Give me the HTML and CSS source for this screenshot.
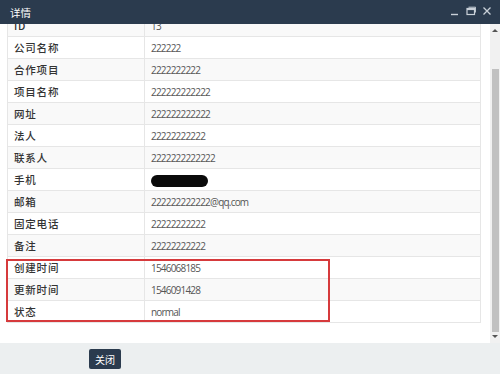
FILE: index.html
```html
<!DOCTYPE html>
<html lang="zh">
<head>
<meta charset="utf-8">
<link rel="stylesheet" href="styles.css">
</head>
<body>
<div class="dialog">
  <div class="titlebar">
    <span class="title">详情</span>
    <div class="controls">
      <svg class="ctl" width="10" height="10" viewBox="0 0 10 10"><path d="M1 8.5H8" stroke="#c9d0d8" stroke-width="1.4"/></svg>
      <svg class="ctl" width="10" height="10" viewBox="0 0 10 10"><rect x="1" y="2.5" width="7.5" height="6" fill="none" stroke="#c9d0d8" stroke-width="1.2"/><path d="M2.5 1.2H9.6V6.5" fill="none" stroke="#c9d0d8" stroke-width="1"/><path d="M1 3.3H8.5" stroke="#c9d0d8" stroke-width="1.6"/></svg>
      <svg class="ctl" width="10" height="10" viewBox="0 0 10 10"><path d="M1.5 1.5L8.5 8.5M8.5 1.5L1.5 8.5" stroke="#c9d0d8" stroke-width="1.3"/></svg>
    </div>
  </div>
  <div class="main">
    <div class="pane">
      <div class="table-wrap">
        <table class="detail">
          <tr><td class="k">ID</td><td class="v">13</td></tr>
          <tr><td class="k">公司名称</td><td class="v">222222</td></tr>
          <tr><td class="k">合作项目</td><td class="v">2222222222</td></tr>
          <tr><td class="k">项目名称</td><td class="v">222222222222</td></tr>
          <tr><td class="k">网址</td><td class="v">222222222222</td></tr>
          <tr><td class="k">法人</td><td class="v">22222222222</td></tr>
          <tr><td class="k">联系人</td><td class="v">2222222222222</td></tr>
          <tr><td class="k">手机</td><td class="v"><span class="redact"></span></td></tr>
          <tr><td class="k">邮箱</td><td class="v">222222222222@qq.com</td></tr>
          <tr><td class="k">固定电话</td><td class="v">22222222222</td></tr>
          <tr><td class="k">备注</td><td class="v">22222222222</td></tr>
          <tr><td class="k">创建时间</td><td class="v">1546068185</td></tr>
          <tr><td class="k">更新时间</td><td class="v">1546091428</td></tr>
          <tr><td class="k">状态</td><td class="v">normal</td></tr>
        </table>
        <div class="highlight"></div>
      </div>
    </div>
    <div class="scrollbar">
      <div class="arrow up"></div>
      <div class="track"><div class="thumb"></div></div>
      <div class="arrow down"></div>
    </div>
  </div>
  <div class="footer">
    <button class="btn">关闭</button>
  </div>
</div>
</body>
</html>
```

FILE: styles.css
```css
html, body {
  margin: 0;
  padding: 0;
}
body {
  width: 500px;
  height: 374px;
  overflow: hidden;
  font-family: "Open Sans", "Noto Sans CJK SC", sans-serif;
  font-size: 11px;
  background: #ffffff;
}
.dialog {
  display: flex;
  flex-direction: column;
  height: 374px;
}
.titlebar {
  height: 24px;
  flex: 0 0 24px;
  background: #2b3b4e;
  display: flex;
  align-items: center;
  justify-content: space-between;
  padding: 0 8px 0 10px;
  position: relative;
  z-index: 2;
}
.title {
  color: #ffffff;
  font-family: "Noto Sans CJK SC", sans-serif;
  font-size: 10.5px;
}
.controls {
  display: flex;
  gap: 6px;
  align-items: center;
  margin-top: -3px;
}
.ctl {
  display: block;
}
.main {
  flex: 0 0 319px;
  height: 319px;
  display: flex;
  background: #ffffff;
}
.pane {
  flex: 1;
  overflow: hidden;
  padding: 0 9px 0 7px;
}
.table-wrap {
  position: relative;
  margin-top: -10px;
}
.detail {
  width: 474px;
  border-collapse: collapse;
  table-layout: fixed;
}
.detail tr:nth-child(odd) {
  background: #f9f9f9;
}
.detail td {
  height: 21px;
  padding: 0 6px;
  border: 1px solid #e6e6e6;
  line-height: 14px;
  vertical-align: middle;
}
.detail td.k {
  width: 124px;
  color: #333333;
  font-family: "Noto Sans CJK SC", sans-serif;
  font-size: 10.5px;
  font-weight: 500;
  letter-spacing: 0.8px;
}
.detail td.v {
  color: #555555;
  padding-left: 6px;
  font-size: 10px;
  letter-spacing: -0.8px;
}
.redact {
  display: inline-block;
  width: 57px;
  height: 12px;
  background: #0a0a0a;
  border-radius: 6px;
  vertical-align: middle;
}
.highlight {
  position: absolute;
  left: -1px;
  top: 245px;
  width: 320px;
  height: 59px;
  border: 2px solid #d63a3c;
}
.scrollbar {
  flex: 0 0 10px;
  width: 10px;
  background: #f1f1f1;
  display: flex;
  flex-direction: column;
  align-items: center;
}
.arrow {
  width: 0;
  height: 0;
  border-left: 3px solid transparent;
  border-right: 3px solid transparent;
}
.arrow.up {
  border-bottom: 3px solid #555;
  margin: 5px 0 37px;
}
.arrow.down {
  border-top: 3px solid #555;
  margin: 3px 0 5px;
}
.track {
  flex: 1;
  width: 10px;
  display: flex;
  justify-content: center;
}
.thumb {
  width: 7px;
  height: 100%;
  background: #c1c1c1;
}
.footer {
  flex: 1;
  background: #eceff0;
  padding: 6px 0 0 89px;
}
.btn {
  width: 32px;
  height: 20px;
  padding: 0;
  border: none;
  border-radius: 2px;
  background: #2b3b4e;
  color: #ffffff;
  font-family: "Noto Sans CJK SC", sans-serif;
  font-size: 10px;
}
```
